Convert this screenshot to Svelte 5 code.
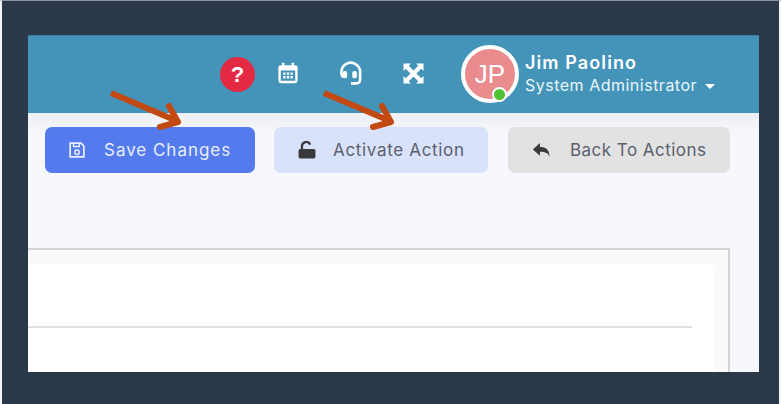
<script>
  const buttons = [
    { label: 'Save Changes', kind: 'primary', icon: 'save' },
    { label: 'Activate Action', kind: 'soft', icon: 'lock' },
    { label: 'Back To Actions', kind: 'grey', icon: 'back' }
  ]
</script>

<div class="frame">
  <div class="screen">
    <header class="topbar">
      <span class="help">?</span>
      <svg class="tool cal" viewBox="0 0 20 20" width="24" height="24">
        <path fill="#fff" d="M5 1.500h2v2h6v-2h2v2h1a2 2 0 0 1 2 2v11a2 2 0 0 1-2 2H4a2 2 0 0 1-2-2v-11a2 2 0 0 1 2-2h1zM4 8v8.500h12V8z"/>
        <path fill="#fff" d="M6 9.500h2v2H6zM9 9.500h2v2H9zM12 9.500h2v2h-2zM6 12.500h2v2H6zM9 12.500h2v2H9zM12 12.500h2v2h-2z"/>
      </svg>
      <svg class="tool" viewBox="0 0 20 20" width="26" height="26">
        <path fill="none" stroke="#fff" stroke-width="2" d="M4 13.500A7.200 7.200 0 1 1 17 10v5c0 2-1.500 3-3 3H10"/>
        <rect x="3.500" y="8.500" width="3.500" height="5.500" rx="1.500" fill="#fff"/>
        <rect x="11" y="8.500" width="3.500" height="5.500" rx="1.500" fill="#fff"/>
      </svg>
      <svg class="tool last" viewBox="0 0 20 20" width="25" height="25">
        <path fill="#fff" d="M2 2h6L6.200 3.800 10 7.600l3.800-3.800L12 2h6v6l-1.800-1.800L12.400 10l3.800 3.800L18 12v6h-6l1.800-1.800L10 12.400l-3.800 3.800L8 18H2v-6l1.800 1.800L7.600 10 3.800 6.200 2 8z"/>
      </svg>
      <div class="avatar">
        JP
        <span class="online"></span>
      </div>
      <div class="user">
        <strong>Jim Paolino</strong>
        <span class="role">System Administrator <i class="caret"></i></span>
      </div>
    </header>

    <main class="content">
      <div class="actions">
        {#each buttons as b}
          <button class={b.kind}>
            {#if b.icon === 'save'}
              <svg viewBox="1 1 14 14" width="16" height="16">
                <path fill="none" stroke="currentColor" stroke-width="1.500" d="M2 2h9.500L14 4.500V14H2z"/>
                <path fill="none" stroke="currentColor" stroke-width="1.300" d="M5 2v3h5V2"/>
                <circle cx="8" cy="10" r="2" fill="none" stroke="currentColor" stroke-width="1.300"/>
              </svg>
            {:else if b.icon === 'lock'}
              <svg viewBox="1 1 16 16" width="18" height="18">
                <path fill="none" stroke="currentColor" stroke-width="2" d="M4.500 8V5.500a3.800 3.800 0 0 1 7.300-1.300"/>
                <rect x="1.500" y="8" width="15" height="8.500" rx="1.500" fill="currentColor"/>
              </svg>
            {:else}
              <svg viewBox="0 1 17 16" width="18" height="18">
                <path fill="currentColor" d="M7.500 2.500v3.700c4.800 0 9 1.600 9 9.300-1.200-3.500-3.600-4.800-9-4.800v3.800L.8 8.500z"/>
              </svg>
            {/if}
            <span>{b.label}</span>
          </button>
        {/each}
      </div>

      <section class="panel">
        <div class="card">
          <div class="divider"></div>
        </div>
      </section>
    </main>
  </div>

  <!-- annotation arrows drawn over the screenshot -->
  <svg class="arrows" viewBox="0 0 781 404" width="781" height="404">
    <g fill="none" stroke="#c24a12" stroke-width="6">
      <path d="M111 93 L177 121"/>
      <path d="M169 106 L178 122 L160 127" stroke-linecap="round" stroke-linejoin="round"/>
      <path d="M324 93 L390 121"/>
      <path d="M382 106 L391 122 L373 127" stroke-linecap="round" stroke-linejoin="round"/>
    </g>
  </svg>
</div>

<style>
  :global(body) {
    margin: 0;
  }
  .frame {
    position: relative;
    box-sizing: border-box;
    width: 781px;
    height: 404px;
    padding: 34px 20px 32px 26px;
    background: #2a3849;
    border-top: 1px solid #8c95a0;
    border-left: 2px solid #f4f5f6;
    border-right: 2px solid #f4f5f6;
    font-family: Inter, "Open Sans", sans-serif;
    overflow: hidden;
  }
  .screen {
    height: 100%;
    display: flex;
    flex-direction: column;
    background: #f7f8fd;
    overflow: hidden;
  }
  .topbar {
    flex: none;
    height: 78px;
    box-sizing: border-box;
    padding: 0 0 0 192px;
    display: flex;
    align-items: center;
    background: #4394b8;
    border-top: 1px solid #3a7f9f;
    color: #fff;
  }
  .help {
    width: 35px;
    height: 35px;
    border-radius: 50%;
    background: #e32a42;
    color: #fff;
    font: 700 22px/35px "Liberation Sans", sans-serif;
    text-align: center;
    margin-right: 21px;
  }
  .tool {
    flex: none;
    margin-top: -3px;
    margin-right: 36.500px;
  }
  .tool.cal {
    margin-right: 38px;
  }
  .tool.last {
    margin-right: 35.500px;
  }
  .avatar {
    position: relative;
    flex: none;
    box-sizing: border-box;
    width: 58px;
    height: 58px;
    margin-top: -2px;
    border: 4px solid #fff;
    border-radius: 50%;
    background: #ea8c8e;
    color: #fff;
    font: 400 26px/50px "Liberation Sans", sans-serif;
    text-align: center;
    margin-right: 6px;
  }
  .online {
    position: absolute;
    right: 8px;
    bottom: -3px;
    width: 11px;
    height: 11px;
    border: 2px solid #fff;
    border-radius: 50%;
    background: #4fc133;
  }
  .user {
    display: flex;
    flex-direction: column;
    gap: 2px;
    margin-top: -2px;
  }
  .user strong {
    font-size: 18px;
    font-weight: 600;
    line-height: 20px;
    letter-spacing: 1.100px;
  }
  .role {
    font-size: 16px;
    line-height: 20px;
    letter-spacing: 0.500px;
    white-space: nowrap;
    color: #eaf4f8;
  }
  .caret {
    display: inline-block;
    margin-left: 3px;
    vertical-align: 2px;
    border: 5.500px solid transparent;
    border-top-color: #fff;
    border-bottom: 0;
  }
  .content {
    flex: 1;
    min-height: 0;
    padding: 14px 29px 0 17px;
    background: linear-gradient(#eeeff3, #f7f8fd 22px);
  }
  .actions {
    display: flex;
    gap: 19px;
  }
  .actions button:last-child {
    margin-left: 1px;
  }
  button {
    flex: none;
    height: 46px;
    display: flex;
    align-items: center;
    gap: 17px;
    padding: 0 24px;
    border: 0;
    border-radius: 7px;
    font: 400 17px Inter, sans-serif;
    white-space: nowrap;
  }
  button svg {
    flex: none;
  }
  .primary {
    width: 210px;
    gap: 19px;
    letter-spacing: 0.970px;
    background: #537bed;
    color: #e8edff;
  }
  .soft {
    width: 214px;
    letter-spacing: 0.670px;
    background: #d9e2fb;
    color: #5a5f6d;
  }
  .soft svg {
    color: #3a3a3c;
  }
  .grey {
    width: 222px;
    gap: 20px;
    letter-spacing: 0.470px;
    background: #e2e2e3;
    color: #5a5f6d;
  }
  .grey svg {
    color: #3a3a3c;
  }
  .panel {
    margin-top: 75px;
    margin-left: -17px;
    height: 200px;
    box-sizing: border-box;
    border-top: 2px solid #d4d4d8;
    border-right: 2px solid #d4d4d8;
    padding: 14px 14px 0 0;
    background: #fafafa;
  }
  .card {
    height: 100%;
    background: #fff;
    border-radius: 0 8px 0 0;
    padding: 62px 22px 0 0;
  }
  .divider {
    height: 2px;
    background: #e3e3e5;
  }
  .arrows {
    position: absolute;
    left: -2px;
    top: -1px;
    pointer-events: none;
  }
</style>
